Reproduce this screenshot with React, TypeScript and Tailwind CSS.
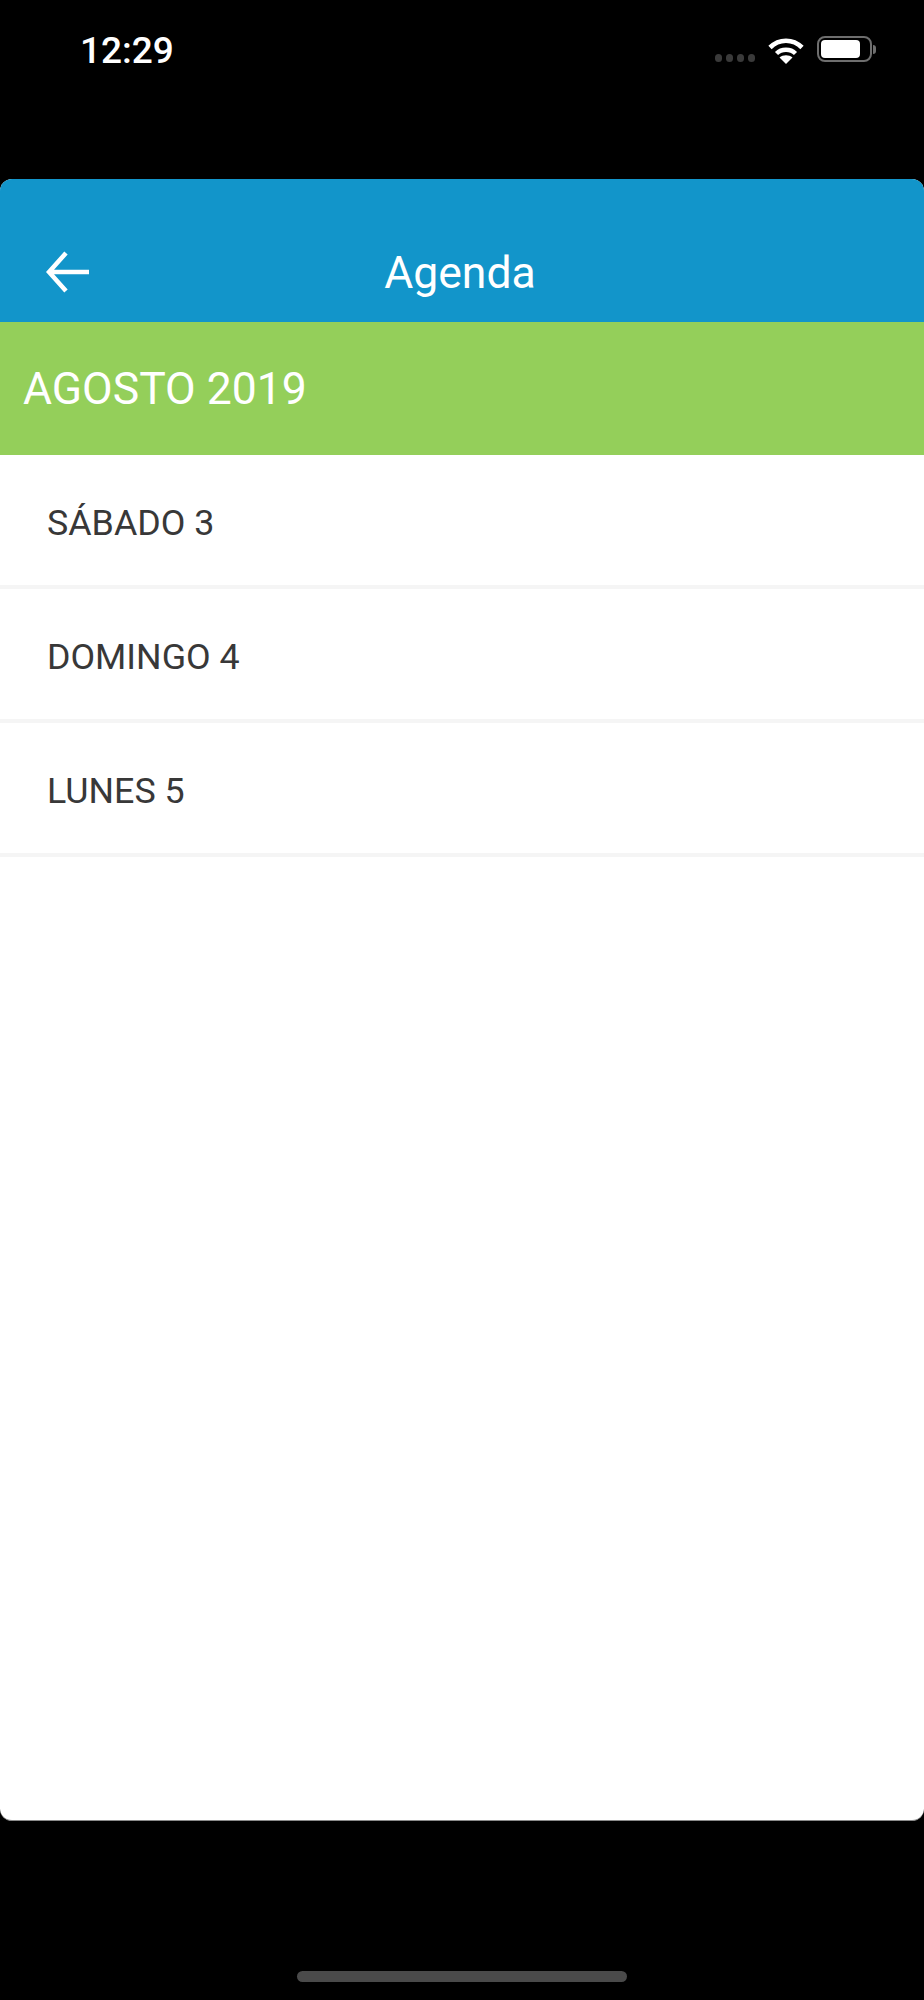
const dias = ["SÁBADO 3", "DOMINGO 4", "LUNES 5"];

const App = () => {
    return (
        <div className="w-[924px] h-[2000px] bg-black flex flex-col font-['Roboto',sans-serif]">
            <div className="h-[179px] flex items-start justify-between pt-[29px] pl-[80px] pr-[48px]">
                <span className="font-medium text-[37px] leading-[44px] text-white">12:29</span>
                <div className="flex items-start mt-[7px]">
                    <div className="flex gap-[3.5px] mt-[18px] mr-[13px]">
                        <div className="w-[7.5px] h-[7.5px] rounded-full bg-[#3a3a3a]" />
                        <div className="w-[7.5px] h-[7.5px] rounded-full bg-[#3a3a3a]" />
                        <div className="w-[7.5px] h-[7.5px] rounded-full bg-[#3a3a3a]" />
                        <div className="w-[7.5px] h-[7.5px] rounded-full bg-[#3a3a3a]" />
                    </div>
                    <svg width="36" height="27" viewBox="0 0 36 27" fill="none" className="mt-[1px] mr-[13px]">
                        <path d="M2 10.5C11 1.5 25 1.5 34 10.5" stroke="white" strokeWidth="4.6" />
                        <path d="M8.5 16.5C13.5 11.5 22.5 11.5 27.5 16.5" stroke="white" strokeWidth="4.4" />
                        <path d="M18 27L11.5 20.5C15 17.5 21 17.5 24.5 20.5Z" fill="white" />
                    </svg>
                    <div className="w-[55px] h-[26px] rounded-[8px] border-2 border-[#6e6e6e] p-[2px] pr-[10px]">
                        <div className="w-full h-full rounded-[4px] bg-white" />
                    </div>
                    <div className="w-[3px] h-[9px] mt-[9px] ml-[1px] rounded-r-full bg-[#6e6e6e]" />
                </div>
            </div>

            <div className="h-[1642px] bg-white rounded-[12px] overflow-hidden border-b border-[#8a8a8a]">
                <div className="h-[143px] bg-[#1295ca] flex items-start pt-[71px] relative">
                    <svg width="44" height="44" viewBox="0 0 44 44" fill="none" className="ml-[46px]">
                        <path d="M20 3L3 22L20 41M3 22H43" stroke="white" strokeWidth="4.5" strokeLinejoin="miter" />
                    </svg>
                    <span className="absolute left-0 right-[4px] top-[68px] text-center text-[44.5px] leading-[52px] text-white">Agenda</span>
                </div>
                <div className="h-[133px] bg-[#94cf5a] flex items-center pl-[23px]">
                    <span className="text-[44.5px] leading-[52px] text-white">AGOSTO 2019</span>
                </div>
                {dias.map((dia) => (
                    <div key={dia} className="h-[134px] pt-[7px] border-b-[4px] border-[#f5f5f5] flex items-center pl-[47px]">
                        <span className="text-[35.8px] text-[#383838]">{dia}</span>
                    </div>
                ))}
            </div>

            <div className="flex justify-center pt-[150px]">
                <div className="w-[330px] h-[11px] rounded-full bg-[#4a4a4a]" />
            </div>
        </div>
    );
};

export default App;
